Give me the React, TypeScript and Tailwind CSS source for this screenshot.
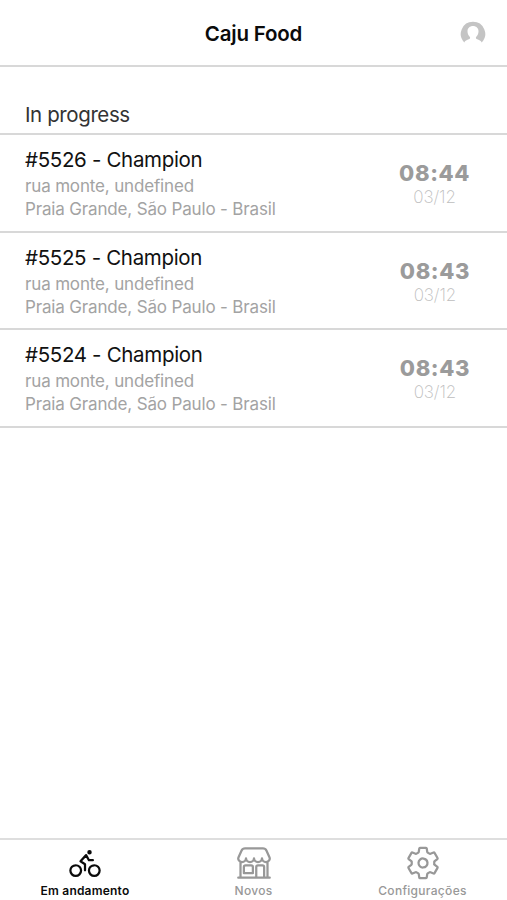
import clsx from "clsx"
import type { IconType } from "react-icons"
import { IoBicycleOutline, IoSettingsOutline, IoStorefrontOutline } from "react-icons/io5"

type Order = {
    id: number
    customer: string
    street: string
    city: string
    time: string
    date: string
}

const orders: Order[] = [
    { id: 5526, customer: "Champion", street: "rua monte, undefined", city: "Praia Grande, São Paulo - Brasil", time: "08:44", date: "03/12" },
    { id: 5525, customer: "Champion", street: "rua monte, undefined", city: "Praia Grande, São Paulo - Brasil", time: "08:43", date: "03/12" },
    { id: 5524, customer: "Champion", street: "rua monte, undefined", city: "Praia Grande, São Paulo - Brasil", time: "08:43", date: "03/12" },
]

const tabs: { label: string; icon: IconType; active?: boolean }[] = [
    { label: "Em andamento", icon: IoBicycleOutline, active: true },
    { label: "Novos", icon: IoStorefrontOutline },
    { label: "Configurações", icon: IoSettingsOutline },
]

const Avatar = () => (
    <svg viewBox="0 0 26 26" className="size-[26px]">
        <path
            fill="#c4c4c4"
            d="M13 .8A12.1 12.1 0 0 0 4.3 21.4C5 19.6 6.6 18.7 9.4 17.9 10.3 17.6 10.3 16.5 9.7 15.7 8.2 14.2 7.5 12.3 7.5 10.3 7.5 7.2 9.8 5.1 13 5.1S18.5 7.2 18.5 10.3C18.5 12.3 17.8 14.2 16.3 15.7 15.7 16.5 15.7 17.6 16.6 17.9 19.4 18.7 21 19.6 21.7 21.4A12.1 12.1 0 0 0 13 .8Z"
        />
    </svg>
)

const Header = () => (
    <header className="grid h-[67px] grid-cols-[1fr_auto_1fr] items-center border-b-2 border-[#d8d8d8] pt-0.5 pr-[21px]">
        <h1 className="col-start-2 pt-px pl-[21px] text-[20.5px] font-semibold tracking-[-0.2px] text-[#0b0b0b]">Caju Food</h1>
        <button className="justify-self-end" aria-label="Perfil">
            <Avatar />
        </button>
    </header>
)

const OrderRow = ({ order }: { order: Order }) => (
    <li className="flex h-[97.5px] items-center justify-between border-b-2 border-[#d8d8d8] pr-[37px] pl-[25px]">
        <div className="pt-[3px]">
            <h3 className="text-[20.5px] leading-[26px] tracking-[-0.33px] text-[#111]">
                #{order.id} - {order.customer}
            </h3>
            <p className="mt-0.5 text-[17px] leading-[23px] tracking-[-0.16px] text-[#a3a3a3]">{order.street}</p>
            <p className="text-[17px] leading-[23px] tracking-[-0.16px] text-[#a3a3a3]">{order.city}</p>
        </div>
        <div className="pt-[3px] text-center">
            <p className="text-[22px] leading-[26px] font-extrabold tracking-[0.6px] text-[#9b9b9b]">{order.time}</p>
            <p className="text-[17px] leading-[22px] font-extralight tracking-[-0.1px] text-[#bdbdbd]">{order.date}</p>
        </div>
    </li>
)

const TabBar = () => (
    <nav className="grid h-[62px] grid-cols-3 border-t-2 border-[#dedede]">
        {tabs.map(({ label, icon: Icon, active }) => (
            <button
                key={label}
                className={clsx(
                    "flex flex-col items-center pt-[5px]",
                    active ? "pl-px text-[#0b0b0b]" : "text-[#989898]"
                )}
            >
                <Icon className="size-9" />
                <span className={clsx("mt-0.5 text-[12px] leading-4", active ? "font-semibold tracking-[0.2px]" : "font-medium tracking-[0.3px]")}>
                    {label}
                </span>
            </button>
        ))}
    </nav>
)

export default function App() {
    return (
        <div className="flex h-screen flex-col bg-white font-['Inter',sans-serif]">
            <Header />
            <main className="flex-1">
                <h2 className="h-[68px] border-b-2 border-[#d8d8d8] pt-9 pl-[25px] text-[20.5px] leading-6 tracking-[-0.4px] text-[#333]">
                    In progress
                </h2>
                <ul>
                    {orders.map((order) => (
                        <OrderRow key={order.id} order={order} />
                    ))}
                </ul>
            </main>
            <TabBar />
        </div>
    )
}
